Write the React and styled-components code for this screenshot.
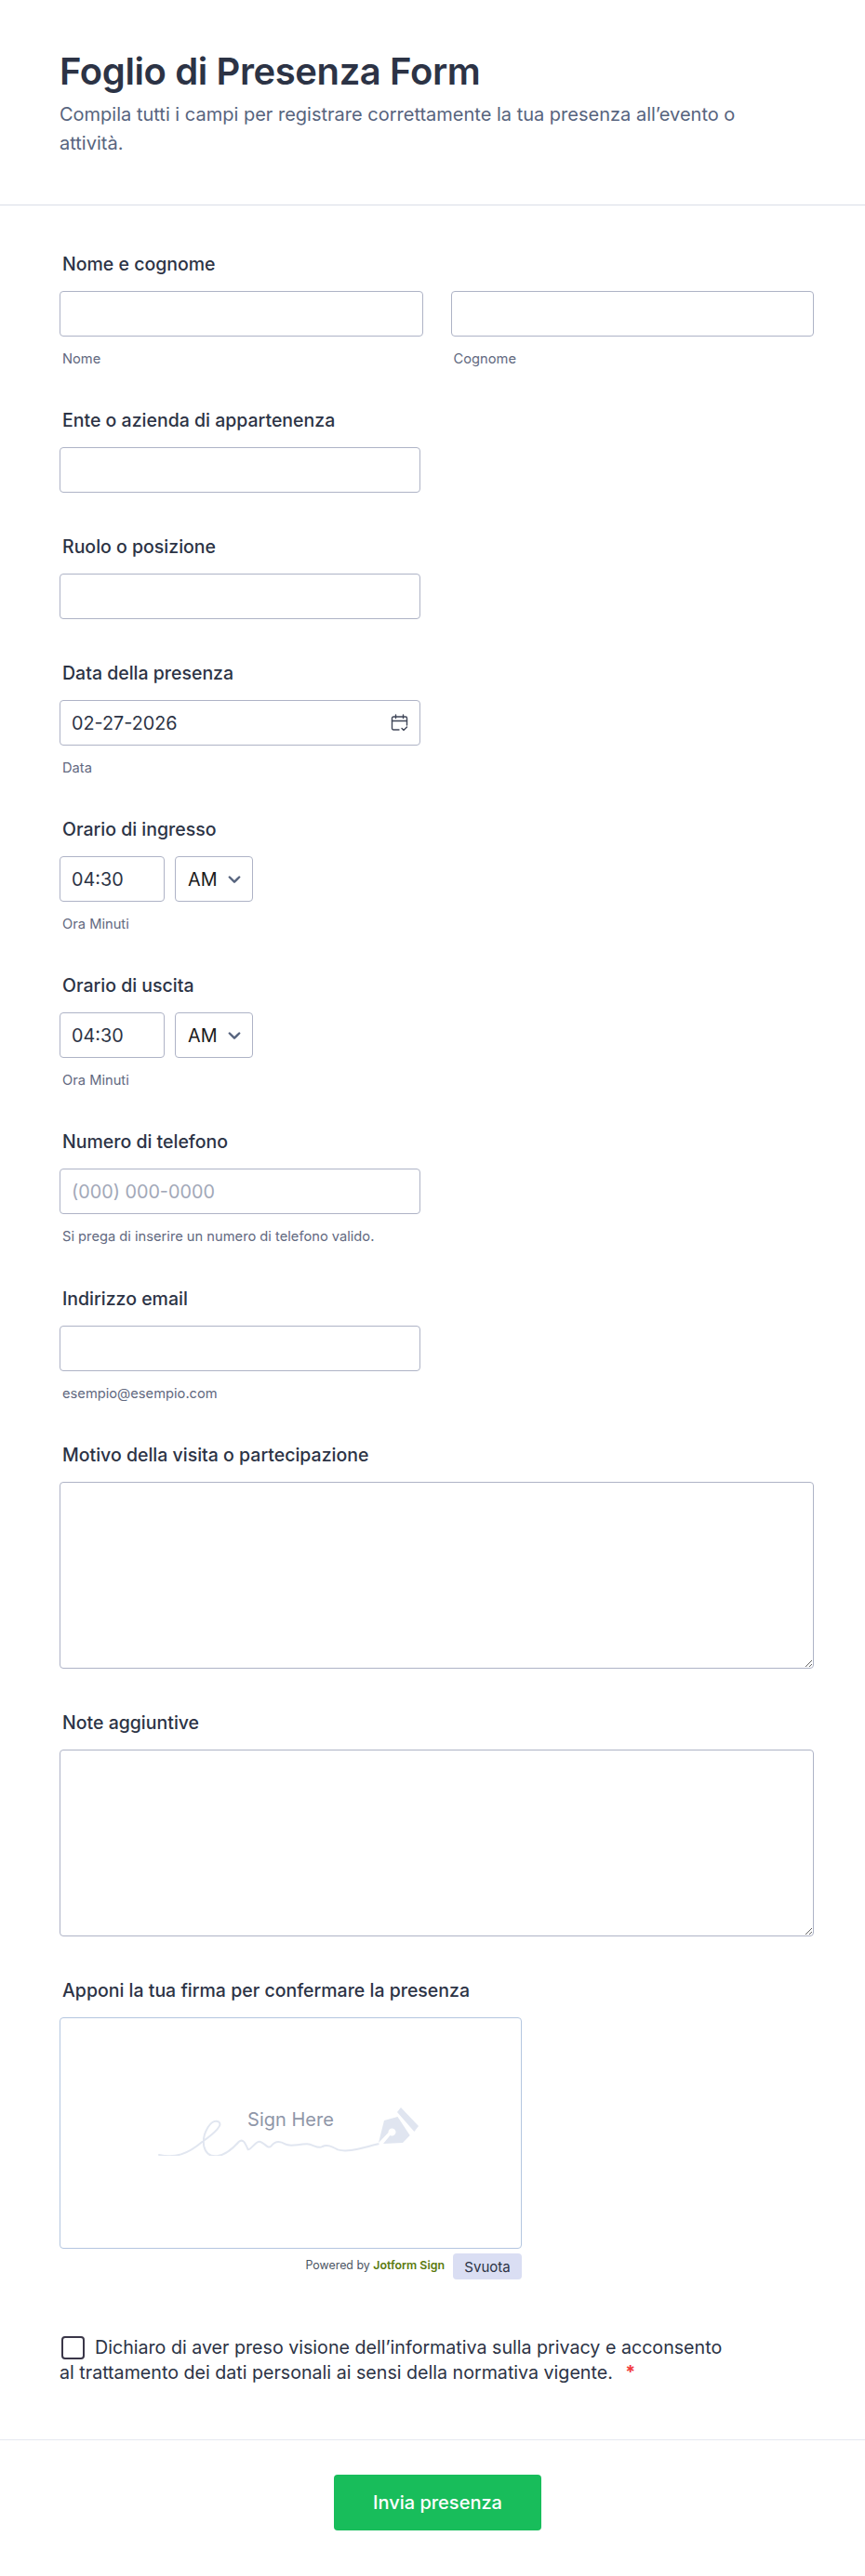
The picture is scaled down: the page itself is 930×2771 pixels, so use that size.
import React from "react";
import styled, { createGlobalStyle } from "styled-components";

const Global = createGlobalStyle`
  html, body { margin: 0; padding: 0; background: #fff; }
  body { font-family: Inter, "Noto Sans", sans-serif; color: #2c3345; }
  * { box-sizing: border-box; }
`;
const Page = styled.div`width: 930px; height: 2771px; background: #fff; overflow: hidden;`;
const Header = styled.header`
  height: 221px; padding: 52px 64px 0; border-bottom: 1px solid #dadee8;
`;
const Title = styled.h1`margin: 0; font-size: 40px; line-height: 50px; font-weight: 600; letter-spacing: -0.4px; color: #2c3345;`;
const Subtitle = styled.p`margin: 6px 0 0; max-width: 760px; font-size: 20px; line-height: 31px; color: #57647e;`;
const Form = styled.form`padding: 51px 55px 0 64px;`;
const Field = styled.div`margin-bottom: ${p => p.$after || 46}px;`;
const Label = styled.div`
  height: 24px; line-height: 24px; padding-left: 3px; margin-bottom: 17px;
  font-size: 19.5px; font-weight: 450; color: #2c3345;
`;
const Row = styled.div`display: flex; gap: ${p => p.$gap || 30}px;`;
const Col = styled.div`width: ${p => p.$w}px;`;
const Input = styled.input`
  display: block; width: ${p => p.$w ? p.$w + "px" : "100%"}; height: 49px;
  padding: 0 12px; border: 1px solid #aeb3c6; border-radius: 4px; background: #fff;
  font: 400 19.8px Inter, sans-serif; color: #2c3345; outline: none;
  &::placeholder { color: #a2a8b8; opacity: 1; }
`;
const Sub = styled.div`
  height: 16px; line-height: 16px; margin-top: 16px; padding-left: 3px;
  font-size: 14.7px; color: #62697f;
`;
const DateBox = styled.div`position: relative; width: 388px;`;
const CalIcon = styled.svg`
  position: absolute; right: 13px; top: 15px; width: 19px; height: 19px;
`;
const SelectBox = styled.div`
  width: 84px; height: 49px; display: flex; align-items: center; justify-content: space-between;
  padding: 0 12px 0 13px; border: 1px solid #aeb3c6; border-radius: 4px;
  font-size: 19.8px; color: #1a1a1a;
`;
const TextArea = styled.textarea`
  display: block; width: 100%; height: ${p => p.$h}px; padding: 12px;
  border: 1px solid #aeb3c6; border-radius: 4px; outline: none; resize: vertical;
  font: 400 19.8px Inter, sans-serif; color: #2c3345; background: #fff;
`;
const SignWrap = styled.div`width: 497px;`;
const SignBox = styled.div`
  position: relative; height: 249px; border: 1px solid #b4c6e0; border-radius: 4px; background: #fff;
`;
const SignText = styled.span`
  position: absolute; left: 0; right: 0; top: 97px; text-align: center; line-height: 24px;
  font-size: 20px; color: #8f96a8;
`;
const SignArt = styled.svg`position: absolute; left: 95px; top: 88px; width: 300px; height: 60px;`;
const SignFoot = styled.div`
  display: flex; justify-content: flex-end; align-items: flex-start; gap: 9px; margin-top: 5px;
`;
const Powered = styled.span`
  font-size: 12.4px; line-height: 16px; margin-top: 5px; color: #4b5563;
  b { color: #5b7a0e; font-weight: 600; }
`;
const Clear = styled.button`
  width: 74px; height: 28px; padding: 0; border: 0; border-radius: 4px; background: #dadef3;
  font: 400 15px Inter, sans-serif; color: #2c3345;
`;
const Consent = styled.div`
  width: 720px; font-size: 19.65px; line-height: 27px; color: #2c3345; margin-top: 60px;
`;
const Check = styled.span`
  display: inline-block; width: 25px; height: 25px; margin: 0 11px 0 2px; vertical-align: -6px;
  border: 2px solid #3a3648; border-radius: 4px;
`;
const Star = styled.span`color: #f23a3c; font-weight: 700; margin-left: 8px;`;
const Footer = styled.div`
  margin-top: 58px; height: 147px; padding-top: 37px; display: flex; justify-content: center; align-items: flex-start;
  border-top: 1px solid #e6e8f0;
`;
const Submit = styled.button`
  width: 223px; height: 60px; margin-left: 11px; border: 0; border-radius: 4px; background: #18bd5b;
  font: 500 20px Inter, sans-serif; color: #fff;
`;

const Chevron = () => (
  <svg width="14" height="14" viewBox="0 0 14 14" fill="none" stroke="#57647e" strokeWidth="2.4" strokeLinecap="round" strokeLinejoin="round">
    <path d="M1.8 4.5 7 9.7 12.2 4.5" />
  </svg>
);

const TimeField = ({ label }) => (
  <Field>
    <Label>{label}</Label>
    <Row $gap={11}>
      <Input $w={113} defaultValue="04:30" />
      <SelectBox>AM <Chevron /></SelectBox>
    </Row>
    <Sub>Ora Minuti</Sub>
  </Field>
);

export default function App() {
  return (
    <Page>
      <Global />
      <Header>
        <Title>Foglio di Presenza Form</Title>
        <Subtitle>Compila tutti i campi per registrare correttamente la tua presenza all’evento o attività.</Subtitle>
      </Header>
      <Form>
        <Field>
          <Label>Nome e cognome</Label>
          <Row>
            <Col $w={391}><Input /><Sub>Nome</Sub></Col>
            <Col $w={391}><Input /><Sub>Cognome</Sub></Col>
          </Row>
        </Field>
        <Field><Label>Ente o azienda di appartenenza</Label><Input $w={388} /></Field>
        <Field><Label>Ruolo o posizione</Label><Input $w={388} /></Field>
        <Field>
          <Label>Data della presenza</Label>
          <DateBox>
            <Input defaultValue="02-27-2026" />
            <CalIcon viewBox="0 0 19 19" fill="none" stroke="#3f4658" strokeWidth="1.4" strokeLinecap="round" strokeLinejoin="round">
              <path d="M9 17H3a1.5 1.5 0 0 1-1.5-1.5V4.5A1.5 1.5 0 0 1 3 3h13a1.5 1.5 0 0 1 1.5 1.5V12" />
              <path d="M1.5 7.5h16M5.5 1v3.5M13.5 1v3.5M12 15.5l2 2 3.5-3.5" />
            </CalIcon>
          </DateBox>
          <Sub>Data</Sub>
        </Field>
        <TimeField label="Orario di ingresso" />
        <TimeField label="Orario di uscita" />
        <Field $after={47}>
          <Label>Numero di telefono</Label>
          <Input $w={388} placeholder="(000) 000-0000" />
          <Sub>Si prega di inserire un numero di telefono valido.</Sub>
        </Field>
        <Field>
          <Label>Indirizzo email</Label>
          <Input $w={388} />
          <Sub>esempio@esempio.com</Sub>
        </Field>
        <Field><Label>Motivo della visita o partecipazione</Label><TextArea $h={201} /></Field>
        <Field><Label>Note aggiuntive</Label><TextArea $h={201} /></Field>
        <div>
          <Label>Apponi la tua firma per confermare la presenza</Label>
          <SignWrap>
            <SignBox>
              <SignArt viewBox="160 2260 300 60">
                <path transform="translate(160 2250) scale(0.3333)" fill="none" stroke="#e1e6f0" strokeWidth="6" strokeLinecap="round"
                  d="M33 207C85 218 125 205 172 165C215 135 240 110 225 100C200 88 170 140 178 180C190 225 240 222 290 165C305 152 312 172 320 190C332 190 345 160 360 165C375 170 385 190 395 178C405 165 420 160 440 172C455 182 480 172 510 172C530 172 545 190 560 180C575 172 590 180 610 190C640 200 680 186 740 172" />
                <path fill="#e0e5f0" fillRule="evenodd"
                  d="M407 2306 413 2282 427.5 2278 440.7 2298 433 2306 412 2307 419.5 2298A4 4 0 1 0 417.5 2295Z" />
                <path fill="#e0e5f0" d="M431 2268 450 2288 445.4 2294 427 2273Z" />
              </SignArt>
              <SignText>Sign Here</SignText>
            </SignBox>
            <SignFoot>
              <Powered>Powered by <b>Jotform Sign</b></Powered>
              <Clear type="button">Svuota</Clear>
            </SignFoot>
          </SignWrap>
        </div>
        <Consent>
          <Check />Dichiaro di aver preso visione dell’informativa sulla privacy e acconsento al trattamento dei dati personali ai sensi della normativa vigente. <Star>*</Star>
        </Consent>
      </Form>
      <Footer><Submit type="button">Invia presenza</Submit></Footer>
    </Page>
  );
}
